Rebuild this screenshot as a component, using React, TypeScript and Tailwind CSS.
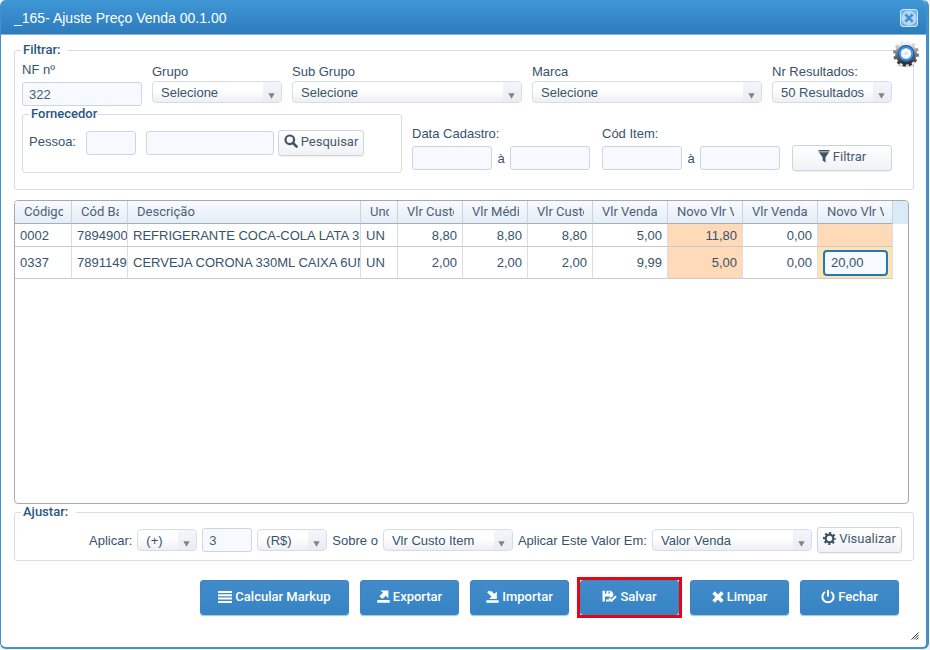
import { useState } from "react";
import type { ReactNode } from "react";
import clsx from "clsx";

interface SelectProps {
  id: string;
  value: string;
  label?: string;
  className?: string;
}

interface ButtonProps {
  icon: ReactNode;
  children: ReactNode;
  className?: string;
}

interface Item {
  codigo: string;
  barras: string;
  descricao: string;
  und: string;
  custo: string;
  medio: string;
  custoItem: string;
  venda: string;
  novoVenda: string;
  vendaPrazo: string;
  novoPrazo: string;
}

const COLUMNS = [
  { title: "Código", width: "w-[57px]" },
  { title: "Cód Barras", width: "w-[56px]" },
  { title: "Descrição", width: "" },
  { title: "Und", width: "w-[37px]" },
  { title: "Vlr Custo", width: "w-[65px]" },
  { title: "Vlr Médio", width: "w-[65px]" },
  { title: "Vlr Custo", width: "w-[65px]" },
  { title: "Vlr Venda", width: "w-[75px]" },
  { title: "Novo Vlr Venda", width: "w-[75px]" },
  { title: "Vlr Venda", width: "w-[75px]" },
  { title: "Novo Vlr Venda", width: "w-[75px]" },
];

const ITEMS: Item[] = [
  {
    codigo: "0002",
    barras: "7894900",
    descricao: "REFRIGERANTE COCA-COLA LATA 350ML",
    und: "UN",
    custo: "8,80",
    medio: "8,80",
    custoItem: "8,80",
    venda: "5,00",
    novoVenda: "11,80",
    vendaPrazo: "0,00",
    novoPrazo: "",
  },
  {
    codigo: "0337",
    barras: "7891149",
    descricao: "CERVEJA CORONA 330ML CAIXA 6UN",
    und: "UN",
    custo: "2,00",
    medio: "2,00",
    custoItem: "2,00",
    venda: "9,99",
    novoVenda: "5,00",
    vendaPrazo: "0,00",
    novoPrazo: "20,00",
  },
];

const inputClass =
  "h-6 min-w-0 rounded-[3px] border border-[#cdd5dd] bg-[#f6faff] px-1.5 text-[#4b5d6d] outline-none focus:border-[#2a79b8]";

const legendClass = "pl-0.5 font-[Roboto,sans-serif] leading-4 font-medium text-[#2a5583]";

const Select = ({ id, value, label, className }: SelectProps) => (
  <div className={clsx("relative", className)}>
    <select
      id={id}
      aria-label={label}
      className="block h-[22px] w-full appearance-none rounded-[4px] border border-[#d5dee7] bg-linear-to-b from-white from-40% to-[#edeff2] pr-5 pl-2 text-[#35536c] outline-none"
    >
      <option>{value}</option>
    </select>
    <span className="pointer-events-none absolute inset-y-px right-px flex w-[18px] items-end justify-center rounded-r-[3px] bg-linear-to-b from-[#f3f6fa] to-[#e9edf2] pr-0.5 pb-[3px]">
      <svg width="7" height="6" viewBox="0 0 7 6" fill="#808489">
        <path d="M0.3 0.3h6.4L3.5 5.8z" />
      </svg>
    </span>
  </div>
);

const LightButton = ({ icon, children, className }: ButtonProps) => (
  <button
    type="button"
    className={clsx(
      "flex h-[26px] items-center justify-center gap-[3px] rounded-[3px] border border-[#cfd4da] bg-linear-to-b from-white to-[#f0f2f5] pb-1 font-[Roboto,sans-serif] whitespace-nowrap text-[#465a6b] shadow-[0_1px_1px_rgba(0,0,0,0.06)]",
      className
    )}
  >
    {icon}
    {children}
  </button>
);

const ActionButton = ({ icon, children, className }: ButtonProps) => (
  <button
    type="button"
    className={clsx(
      "flex h-[35px] items-center justify-center gap-[3px] rounded-[3px] border border-[#3f82bd] bg-linear-to-b from-[#428bca] to-[#3684c4] pb-0.5 font-[Roboto,sans-serif] font-medium whitespace-nowrap text-white shadow-[0_1px_1px_rgba(66,139,202,0.5)]",
      className
    )}
  >
    {icon}
    {children}
  </button>
);

const SearchIcon = () => (
  <svg width="14" height="14" viewBox="0 0 14 14" fill="none" stroke="#3f5364">
    <circle cx="5.8" cy="5.8" r="4.3" strokeWidth="2.2" />
    <path d="M9 9l3.6 3.6" strokeWidth="2.6" strokeLinecap="round" />
  </svg>
);

const FunnelIcon = () => (
  <svg width="12" height="13" viewBox="0 0 12 13" fill="#3f5364">
    <path d="M0.5 0h11v1.5H0.5zM0.9 2.3h10.2L7.5 7.2v5.4L4.6 10.6V7.2z" />
  </svg>
);

const CogIcon = () => (
  <svg width="13" height="13" viewBox="0 0 13 13" fill="none" stroke="#3f5364">
    <circle cx="6.5" cy="6.5" r="3.8" strokeWidth="2.2" />
    <circle cx="6.5" cy="6.5" r="5.4" strokeWidth="2.2" strokeDasharray="2.1 2.141" strokeDashoffset="1.05" />
  </svg>
);

const LinesIcon = () => (
  <svg width="14" height="12" viewBox="0 0 14 12" fill="#fff">
    <path d="M0 0h14v2H0zM0 3.3h14v2H0zM0 6.6h14v2H0zM0 9.9h14v2H0z" />
  </svg>
);

const ExportIcon = () => (
  <svg width="13" height="13" viewBox="0 0 13 13" fill="#fff">
    <path d="M3.4 0.4h8v7.8L8.8 5.7 6 8.5 4.4 8.3 2.8 6.8v-1l3.3-3zM0.3 10h12.4v2.7H0.3z" />
  </svg>
);

const ImportIcon = () => (
  <svg width="13" height="13" viewBox="0 0 13 13" fill="#fff">
    <path d="M1.2 2.4L2.8 0.6l1.3 1.2L5.2 0.7l3 3.2L10.8 1.4v7.5H3.2l2.4-2.3zM0.3 10.2h12.4v2.5H0.3z" />
  </svg>
);

const SaveIcon = () => (
  <svg width="15" height="13" viewBox="0 0 15 13" fill="#fff">
    <path
      fillRule="evenodd"
      d="M0.5 0.8h8.4l2.4 2.4v2.6L9 8 7.6 6.6H2.9v4.8H0.5zM2.9 0.8v3h1.5v-3zM6.4 1.4v2h1.4v-2z"
    />
    <path d="M4 9.6h2.4l1.8 1.8H4z" />
    <path d="M6.9 8.4l2.5 2.5 4.6-4.6" fill="none" stroke="#fff" strokeWidth="2" />
  </svg>
);

const ClearIcon = () => (
  <svg width="12" height="12" viewBox="0 0 12 12" stroke="#fff" strokeWidth="3.6">
    <path d="M1.6 1.6l8.8 8.8M10.4 1.6l-8.8 8.8" />
  </svg>
);

const PowerIcon = () => (
  <svg width="14" height="14" viewBox="0 0 14 14" fill="none" stroke="#fff" strokeWidth="2">
    <path d="M4 2a5.6 5.6 0 1 0 6 0M7 0v6.6" />
  </svg>
);

const GearBadge = () => (
  <svg width="28" height="28" viewBox="0 0 28 28" fill="none">
    <defs>
      <linearGradient id="gear" x1="0" y1="0" x2="0" y2="1">
        <stop offset="0" stopColor="#f0f0f0" />
        <stop offset="0.4" stopColor="#8c8c8a" />
        <stop offset="1" stopColor="#33322f" />
      </linearGradient>
    </defs>
    <ellipse cx="14" cy="25.6" rx="9" ry="1.6" fill="#000" opacity="0.15" />
    <circle cx="14" cy="13.5" r="11.3" stroke="url(#gear)" strokeWidth="3.4" strokeDasharray="3.1 2.817" />
    <circle cx="14" cy="13.5" r="9.4" stroke="url(#gear)" strokeWidth="3" />
    <circle cx="14" cy="13.5" r="8.4" fill="#1258ad" />
    <circle cx="14" cy="13.5" r="6.7" stroke="#4f97e4" strokeWidth="1.2" />
    <circle cx="14" cy="13.5" r="5.6" fill="#d3e4f6" />
    <circle cx="14" cy="13.5" r="3.6" stroke="#fff" strokeWidth="2" strokeDasharray="2.4 1.37" />
    <circle cx="14" cy="13.5" r="2.6" stroke="#fff" strokeWidth="1.4" />
  </svg>
);

const Range = ({ id, label }: { id: string; label: string }) => (
  <div className="pt-[19px]">
    <label htmlFor={id} className="mb-1 block leading-[17px]">
      {label}
    </label>
    <div className="flex items-center pr-0.5">
      <input id={id} className={clsx(inputClass, "w-20 flex-1")} />
      <span className="w-[18px] text-center">à</span>
      <input aria-label={`${label} até`} className={clsx(inputClass, "w-20 flex-1")} />
    </div>
  </div>
);

const FilterPanel = () => (
  <fieldset className="rounded-[3px] border border-[#d9dce0] pr-[21px] pb-4 pl-[7px]">
    <legend className={clsx(legendClass, "-ml-px pr-1.5")}>Filtrar:</legend>
    <div className="grid grid-cols-[12fr_13fr_23fr_23fr_12fr] items-end gap-2.5 pt-[3px]">
      <div>
        <label htmlFor="nf" className="mb-1 block leading-[17px]">
          NF nº
        </label>
        <input id="nf" defaultValue="322" className={clsx(inputClass, "block w-full")} />
      </div>
      {[
        ["grupo", "Grupo", "Selecione"],
        ["subgrupo", "Sub Grupo", "Selecione"],
        ["marca", "Marca", "Selecione"],
        ["resultados", "Nr Resultados:", "50 Resultados"],
      ].map(([id, label, value]) => (
        <div key={id} className="pb-[3px]">
          <label htmlFor={id} className="mb-px block leading-[17px]">
            {label}
          </label>
          <Select id={id} value={value} />
        </div>
      ))}
    </div>
    <div className="grid grid-cols-[38fr_18fr_18fr_10fr] gap-2.5">
      <fieldset className="min-w-0 rounded-[3px] border border-[#d9dce0] pb-4 pl-1.5">
        <legend className={legendClass}>Fornecedor</legend>
        <div className="flex items-center pt-2">
          <label htmlFor="pessoa" className="w-[57px] pb-1">
            Pessoa:
          </label>
          <input id="pessoa" className={clsx(inputClass, "w-[50px]")} />
          <input aria-label="Nome da pessoa" className={clsx(inputClass, "ml-2.5 w-32")} />
          <LightButton icon={<SearchIcon />} className="ml-1 w-[86px]">
            Pesquisar
          </LightButton>
        </div>
      </fieldset>
      <Range id="cadastro" label="Data Cadastro:" />
      <Range id="item" label="Cód Item:" />
      <LightButton icon={<FunnelIcon />} className="mt-[39px] w-full">
        Filtrar
      </LightButton>
    </div>
  </fieldset>
);

const cell = "overflow-hidden border-r border-b border-r-[#dcdce4] border-b-[#c9c9c9] whitespace-nowrap";

const ItemsTable = () => {
  const [novoPrazo, setNovoPrazo] = useState(ITEMS[1].novoPrazo);

  return (
    <div className="flex-1 overflow-hidden rounded-[4px] border border-[#a9a9ad]">
      <table className="w-full table-fixed border-separate border-spacing-0">
        <thead>
          <tr className="h-[23px]">
            {COLUMNS.map((col, i) => (
              <th
                key={i}
                className={clsx(
                  "border-r border-b border-r-[#c6d3e0] border-b-[#a5adb5] bg-linear-to-b from-[#f8fafd] to-[#e4edf6] px-2 pl-[9px] text-left font-[Roboto,sans-serif] font-normal text-[#4a6178]",
                  col.width
                )}
              >
                <span className="block overflow-hidden leading-5 whitespace-nowrap">{col.title}</span>
              </th>
            ))}
            <td className="w-[15px] bg-[#dbeaf9]" />
          </tr>
        </thead>
        <tbody>
          {ITEMS.map((item, i) => (
            <tr key={item.codigo} className={i === 0 ? "h-[23px]" : "h-8"}>
              <td className={clsx(cell, "pl-[5px]")}>{item.codigo}</td>
              <td className={clsx(cell, "pl-[5px]")}>{item.barras}</td>
              <td className={clsx(cell, "pl-[5px]")}>{item.descricao}</td>
              <td className={clsx(cell, "pl-[5px]")}>{item.und}</td>
              <td className={clsx(cell, "pr-[5px] text-right")}>{item.custo}</td>
              <td className={clsx(cell, "pr-[5px] text-right")}>{item.medio}</td>
              <td className={clsx(cell, "pr-[5px] text-right")}>{item.custoItem}</td>
              <td className={clsx(cell, "pr-[5px] text-right")}>{item.venda}</td>
              <td className={clsx(cell, "bg-[#ffdab9] pr-[5px] text-right")}>{item.novoVenda}</td>
              <td className={clsx(cell, "pr-[5px] text-right")}>{item.vendaPrazo}</td>
              {item.novoPrazo ? (
                <td className={clsx(cell, "bg-[#ffe4b0] py-0 pr-1 pl-[5px]")}>
                  <input
                    aria-label="Novo Vlr Venda"
                    value={novoPrazo}
                    onChange={(e) => setNovoPrazo(e.target.value)}
                    className="block h-[26px] w-full rounded-[4px] border-2 border-[#2578b8] bg-[#f6faff] px-1.5 outline-none"
                  />
                </td>
              ) : (
                <td className={clsx(cell, "bg-[#ffdab9]")} />
              )}
            </tr>
          ))}
        </tbody>
      </table>
    </div>
  );
};

const AdjustPanel = () => (
  <fieldset className="rounded-[3px] border border-[#d9dce0] pr-[11px] pb-[7px]">
    <legend className={clsx(legendClass, "ml-1.5 pr-2")}>Ajustar:</legend>
    <div className="flex items-center justify-end gap-[5px] pt-[7px]">
      <label htmlFor="operacao">Aplicar:</label>
      <Select id="operacao" value="(+)" className="w-[60px]" />
      <input aria-label="Valor" defaultValue="3" className={clsx(inputClass, "w-[50px]")} />
      <Select id="tipo" value="(R$)" label="Tipo" className="w-[70px]" />
      <label htmlFor="base">Sobre o</label>
      <Select id="base" value="Vlr Custo Item" className="w-[130px]" />
      <label htmlFor="destino">Aplicar Este Valor Em:</label>
      <Select id="destino" value="Valor Venda" className="w-40" />
      <LightButton icon={<CogIcon />} className="w-[85px]">
        Visualizar
      </LightButton>
    </div>
  </fieldset>
);

const App = () => {
  return (
    <div className="flex min-h-screen flex-col bg-[#eef3f8] pr-px pb-px font-['Liberation_Sans',Arial,sans-serif] text-[13px] leading-[17px] text-[#35536c]">
      <div className="relative flex flex-1 flex-col rounded-[6px] border-r-[3px] border-b-2 border-l border-[#4390cb] bg-white">
        <header className="flex h-[35px] items-center justify-between rounded-t-[5px] border-b border-[#8eb4d6] bg-linear-to-b from-[#3f97d6] to-[#2e7cbd] pr-2 pl-[13px] text-white">
          <h1 className="pt-0.5 text-sm">_165- Ajuste Preço Venda 00.1.00</h1>
          <button
            type="button"
            aria-label="Fechar janela"
            className="mt-0.5 flex size-[18px] items-center justify-center rounded-[3px] border border-[#d4e8f8] bg-[#78b4e2]"
          >
            <svg width="16" height="16" viewBox="0 0 16 16" fill="none">
              <circle cx="8" cy="8" r="7.6" fill="#b3d8f5" />
              <path d="M4.4 4.4l7.2 7.2M11.6 4.4l-7.2 7.2" stroke="#3f8fce" strokeWidth="2.6" />
            </svg>
          </button>
        </header>
        <div className="absolute top-10 right-1.5">
          <GearBadge />
        </div>
        <main className="flex flex-1 flex-col pt-[7px] pr-3 pl-[13px]">
          <FilterPanel />
          <div className="flex flex-1 flex-col pt-2.5 pr-[5px]">
            <ItemsTable />
          </div>
          <AdjustPanel />
        </main>
        <footer className="flex justify-end gap-[11px] px-[27px] pt-[19px] pb-8">
          <ActionButton icon={<LinesIcon />} className="w-[149px]">
            Calcular Markup
          </ActionButton>
          <ActionButton icon={<ExportIcon />} className="w-[99px]">
            Exportar
          </ActionButton>
          <ActionButton icon={<ImportIcon />} className="w-[99px]">
            Importar
          </ActionButton>
          <div className="outline-3 outline-[#e30613]">
            <ActionButton icon={<SaveIcon />} className="w-[99px]">
              Salvar
            </ActionButton>
          </div>
          <ActionButton icon={<ClearIcon />} className="w-[99px]">
            Limpar
          </ActionButton>
          <ActionButton icon={<PowerIcon />} className="w-[99px]">
            Fechar
          </ActionButton>
        </footer>
        <svg className="absolute right-[7px] bottom-[7px]" width="8" height="8" viewBox="0 0 8 8" stroke="#333">
          <path d="M0.5 7.5l7-7M3 7.5l4.5-4.5M5.5 7.5l2-2" />
        </svg>
      </div>
    </div>
  );
};

export default App;
